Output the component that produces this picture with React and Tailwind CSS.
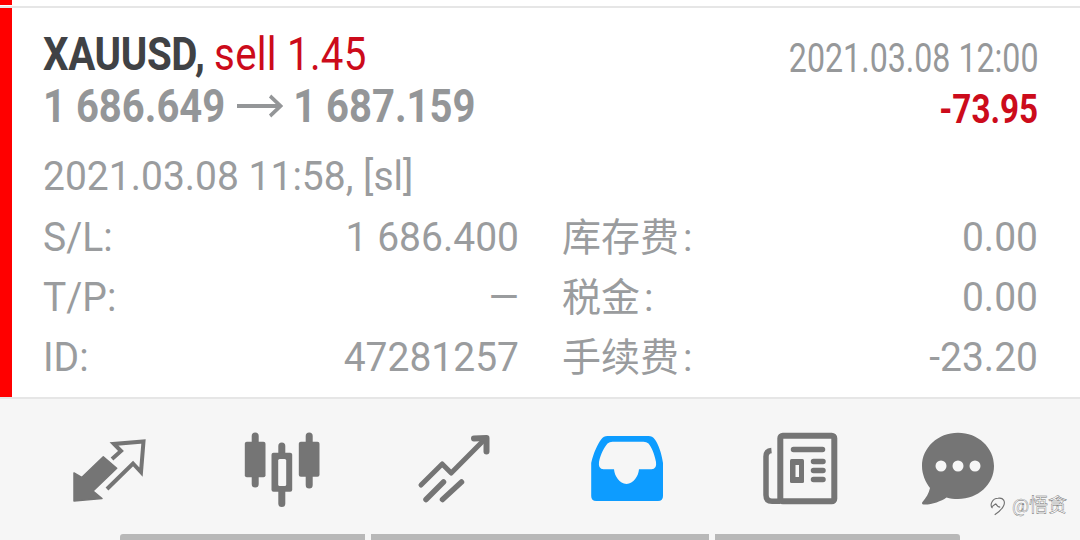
const font = "font-['Roboto','Noto_Sans_CJK_SC',sans-serif]";

function Row({ a, b, c, d }) {
  return (
    <div className="grid h-[60px] grid-cols-[476px_476px] gap-x-[43px] items-center pt-[1px] text-[39px] leading-[60px] text-[#9a9c9e]">
      <div className="flex justify-between">
        <span className="scale-y-[1.03]">{a}</span>
        <span className="scale-y-[1.03]">{b}</span>
      </div>
      <div className="flex justify-between">
        <span className="flex">
          {c}
          <span className="ml-[4px]">:</span>
        </span>
        <span className="scale-y-[1.03]">{d}</span>
      </div>
    </div>
  );
}

const G = "#757575";
const BG = "#f6f6f6";

function Icon({ cx, className, children }) {
  return (
    <svg width="90" height="80" viewBox={`${cx - 45} 430 90 80`} className={`shrink-0 ${className}`}>
      {children}
    </svg>
  );
}

export default function App() {
  return (
    <div className={`relative flex h-[540px] w-[1080px] flex-col overflow-hidden bg-white ${font}`}>
      <div className="flex h-[6px]">
        <div className="h-[5px] w-3 bg-[#ff0000]" />
      </div>
      <div className="h-[2px] bg-[#e6e6e6]" />
      <div className="flex h-[389px]">
        <div className="w-3 bg-[#ff0000]" />
        <div className="flex-1 pl-[31px] pt-[21px]">
          <div className="flex h-[51px] w-[995px] items-center justify-between">
            <div className="origin-left scale-x-[.875] whitespace-nowrap text-[46px] leading-[51px]">
              <span className="font-bold tracking-[-0.4px] text-[#404245]">XAUUSD, </span>
              <span className="tracking-[0.3px] text-[#cc0b1b]">sell 1.45</span>
            </div>
            <div className="origin-right scale-x-[.804] translate-y-[4px] whitespace-nowrap text-[40px] leading-[51px] text-[#96989a]">
              2021.03.08 12:00
            </div>
          </div>
          <div className="flex h-[52px] w-[995px] items-center justify-between">
            <div className="flex origin-left scale-x-[.87] items-center whitespace-nowrap text-[46px] font-bold leading-[52px] text-[#949698]">
              <span>1 686.649</span>
              <svg width="53" height="24" viewBox="0 0 53 24" className="ml-[13px] mr-[12px] shrink-0" fill="none" stroke="#949698" strokeWidth="4">
                <path d="M0 12H50M38 2L50 12L38 22" />
              </svg>
              <span>1 687.159</span>
            </div>
            <div className="origin-right scale-x-[.83] translate-y-[4px] whitespace-nowrap text-[40px] font-bold leading-[52px] text-[#cc0b1b]">
              -73.95
            </div>
          </div>
          <div className="mt-[15px] flex h-[60px] items-center whitespace-nowrap text-[39px] leading-[60px] text-[#9a9c9e]">
            <span className="scale-y-[1.03]">2021.03.08 11:58, [sl]</span>
          </div>
          <Row a="S/L:" b="1 686.400" c="库存费" d="0.00" />
          <Row a="T/P:" b="—" c="税金" d="0.00" />
          <Row a="ID:" b="47281257" c="手续费" d="-23.20" />
        </div>
      </div>
      <div className="h-[2px] bg-[#e6e6e6]" />
      <div className="flex flex-1 flex-col justify-between bg-[#f6f6f6]">
        <div className="flex pl-[65px] pt-[31px]">
          <Icon cx={110}>
            <path d="M74 473L74 501L102 498.5L93 491L116.7 468.3L103.3 456.7L81.7 477.5Z" fill={G} stroke={G} strokeWidth="1.5" strokeLinejoin="round" />
            <path d="M112 459L121 451L114 444L143.5 441.5L141 472L133 463.5L107 489" fill="none" stroke={G} strokeWidth="4" />
          </Icon>
          <Icon cx={281.5} className="ml-[81.5px]">
            <g stroke={G} strokeWidth="7" strokeLinecap="round">
              <path d="M254.7 436V484M281.3 446V503.5M308.7 436V485" />
            </g>
            <rect x="244.3" y="441.7" width="20.7" height="35.6" rx="2" fill={G} />
            <rect x="298.3" y="441.7" width="20.7" height="35" rx="2" fill={G} />
            <rect x="271" y="452.7" width="20.7" height="39" rx="2" fill={G} />
            <rect x="277.7" y="459" width="8" height="27" rx="1.5" fill={BG} />
          </Icon>
          <Icon cx={453.5} className="ml-[82px]">
            <g fill="none" stroke={G} strokeLinecap="round" strokeLinejoin="round">
              <path d="M420.5 485L441.7 464L450.7 473L483 440.5" strokeWidth="5" />
              <path d="M473.5 438.5L486 438L486 451.5" strokeWidth="6" />
              <path d="M425.5 499.5L443 482M442 499.5L461 482" strokeWidth="5.5" />
            </g>
          </Icon>
          <Icon cx={626.5} className="ml-[83px]">
            <path
              d="M590.7 463C593 453 597 444 601 439Q603 436 607 436H648Q652 436 654 439C658 444 661 453 662.5 463V496Q662.5 501 657.5 501H595.7Q590.7 501 590.7 496Z"
              fill="#0d9cff"
            />
            <path
              d="M598.5 462C600 454 604 447 607 443.5Q609 441.7 612 441.7H643Q646 441.7 648 443.5C651 447 654 454 655.5 462Q656.5 469.3 651 469.3H638.5C638 476 633 484 626 484C619 484 614 476 613.5 469.3H603Q597.5 469.3 598.5 462Z"
              fill={BG}
            />
          </Icon>
          <Icon cx={799} className="ml-[82.5px]">
            <rect x="780.3" y="435.7" width="54" height="65.6" rx="2.5" fill="none" stroke={G} strokeWidth="6" />
            <path d="M771.5 450.5Q766 451 766 456.5V495Q766 501.3 772 501.3H780" fill="none" stroke={G} strokeWidth="5.5" />
            <path d="M793.5 449.5H822.5M813.5 461.5H823M813.5 470.5H823M813.5 479.5H823" stroke={G} strokeWidth="5.5" strokeLinecap="round" />
            <rect x="790" y="459" width="14" height="24" rx="1.5" fill={G} />
            <rect x="795.5" y="465" width="3.5" height="12" fill={BG} />
          </Icon>
          <Icon cx={958} className="ml-[69px]">
            <path
              d="M958 432.7C978 432.7 994 447.5 994 466C994 484.5 978 499 958 499C954 499 950 498.5 946.5 497.5C941 501.5 931 505 923.5 504.5C922 504.3 921.5 503 922.5 502C926 498 929 493 930 488C925.5 482 922 474.5 922 466C922 447.5 938 432.7 958 432.7Z"
              fill={G}
            />
            <circle cx="941" cy="466" r="5.5" fill={BG} />
            <circle cx="958" cy="466" r="5.5" fill={BG} />
            <circle cx="975" cy="466" r="5.5" fill={BG} />
          </Icon>
        </div>
        <div className="flex h-[6px] gap-[6px] pl-[120px]">
          <div className="w-[245px] rounded-tl-[3px] bg-[#b8b8b8]" />
          <div className="w-[338px] bg-[#b8b8b8]" />
          <div className="w-[245px] rounded-tr-[3px] bg-[#b8b8b8]" />
        </div>
      </div>
      <div className="absolute left-[988px] top-[495px] flex items-center gap-[4px] text-[19px] leading-[20px] text-white [-webkit-text-stroke:0.4px_#707070]">
        <svg width="20" height="22" viewBox="0 0 18 20" fill="none" stroke="#707070" strokeWidth="1">
          <path d="M4 12C1 9 4 3 9 3C14 2 16 6 14 10C12 14 9 16 6 18" />
          <path d="M3 11L7 8M7 8C8 10 9 11 11 11" />
        </svg>
        <span>@悟贪</span>
      </div>
    </div>
  );
}
